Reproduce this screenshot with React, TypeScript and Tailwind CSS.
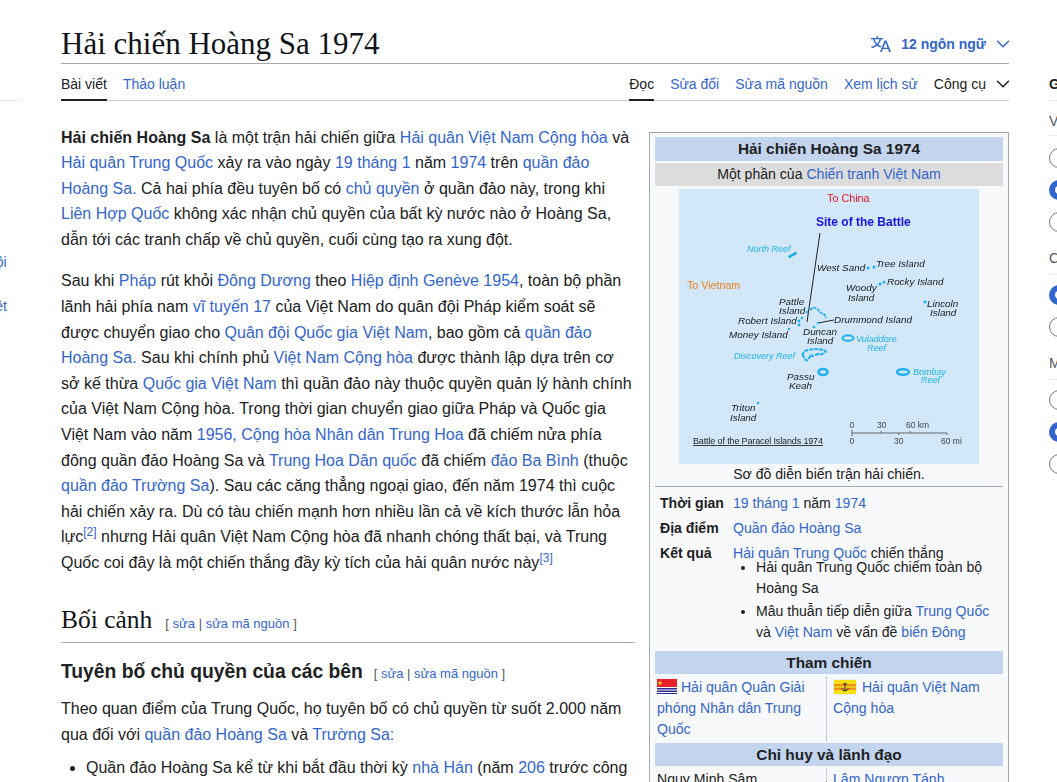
import React from "react";
import { ChevronDown } from "lucide-react";

const A: React.FC<{ children: React.ReactNode }> = ({ children }) => (
    <a href="#" className="text-[#3366cc]">{children}</a>
);

const EditLinks: React.FC<{ className?: string }> = ({ className }) => (
    <span className={"text-[13px] leading-none text-[#54595d] font-normal font-['Liberation_Sans',sans-serif] " + className}>
        [ <A>sửa</A> | <A>sửa mã nguồn</A> ]
    </span>
);

const Radio: React.FC<{ on?: boolean }> = ({ on }) => (
    <div className={on ? "w-5 h-5 shrink-0 rounded-full border-[6px] border-[#3366cc] bg-white" : "w-5 h-5 shrink-0 rounded-full border border-[#72777d] bg-white"} />
);

const labels: [string, number, number][] = [
    ["West Sand", 138, 82], ["Tree Island", 197, 78], ["Rocky Island", 208, 96], ["Woody", 167, 102], ["Island", 169, 112],
    ["Lincoln", 248, 118], ["Island", 251, 127], ["Pattle", 100, 116], ["Island", 100, 125], ["Robert Island", 59, 135],
    ["Drummond Island", 155, 134], ["Money Island", 50, 149], ["Duncan", 124, 146], ["Island", 128, 155],
    ["Passu", 108, 191], ["Keah", 110, 200], ["Triton", 52, 222], ["Island", 51, 232],
];

const reefLabels: [string, number, number][] = [
    ["North Reef", 68, 63], ["Vuladdore", 177, 153], ["Reef", 188, 162], ["Discovery Reef", 55, 170],
    ["Bombay", 234, 186], ["Reef", 242, 194],
];

const Map = () => (
    <svg width="300" height="275" viewBox="0 0 300 275" className="block blur-[0.3px]" fontFamily="'Liberation Sans', sans-serif">
        <rect width="300" height="275" fill="#d2e8f8" />
        <text x="148" y="13" fontSize="10.800" fill="#f01020">To China</text>
        <text x="137" y="37" fontSize="12" fontWeight="700" fill="#1414e0">Site of the Battle</text>
        <text x="8" y="100" fontSize="10.700" fill="#f07d1a">To Vietnam</text>
        <line x1="141" y1="44" x2="128" y2="133" stroke="#222" strokeWidth="1" />
        <line x1="139" y1="134" x2="155" y2="131" stroke="#222" strokeWidth="1" />
        {labels.map(([t, x, y]) => (
            <text key={t + x} x={x} y={y} fontSize="9.900" fontStyle="italic" fill="#1a1a1a">{t}</text>
        ))}
        {reefLabels.map(([t, x, y]) => (
            <text key={t + x} x={x} y={y} fontSize="9" fontStyle="italic" fill="#1eb0ee">{t}</text>
        ))}
        <g fill="#1eb0ee">
            <path d="M109 67l8-4.500 1.200 2.500-4 2-4 2.500z" />
            <circle cx="189" cy="79" r="1.600" />
            <circle cx="195" cy="78" r="1.600" />
            <circle cx="201" cy="95" r="1.500" />
            <circle cx="205" cy="93" r="1.500" />
            <circle cx="246" cy="113" r="1.600" />
            <circle cx="79" cy="214" r="1.300" />
            <circle cx="128" cy="123" r="1.300" />
            <circle cx="123" cy="129" r="1.300" />
            <circle cx="120" cy="132" r="1.400" />
            <circle cx="120" cy="136" r="1.400" />
            <circle cx="110" cy="140" r="1.200" />
            <circle cx="135" cy="138" r="1.300" />
            <circle cx="139" cy="134" r="1.300" />
        </g>
        <g fill="none" stroke="#1eb0ee">
            <path d="M131 121q4-4 7-1l4 4 4 2 1 3" strokeWidth="1.800" strokeDasharray="3 1" />
            <ellipse cx="169" cy="149" rx="5.500" ry="2.800" strokeWidth="2" />
            <path d="M124 167q-1-5 5-6t8-1 7 1 1 3-4 1-5 1-4 0-2 3-4 0z" strokeWidth="2" strokeDasharray="4 1" />
            <ellipse cx="144" cy="183" rx="4.500" ry="3" strokeWidth="2.600" />
            <ellipse cx="224" cy="183" rx="6" ry="2.800" strokeWidth="2.400" />
        </g>
        <text x="14" y="255" fontSize="9" fill="#222" textDecoration="underline" textLength="130">Battle of the Paracel Islands 1974</text>
        <g stroke="#666" strokeWidth="1">
            <line x1="173" y1="244" x2="268" y2="244" />
            <line x1="173" y1="241" x2="173" y2="247" />
            <line x1="202" y1="242" x2="202" y2="244" />
            <line x1="231" y1="242" x2="231" y2="244" />
            <line x1="220" y1="244" x2="220" y2="246" />
            <line x1="268" y1="244" x2="268" y2="246" />
        </g>
        <g fontSize="8.500" fill="#444">
            <text x="170.500" y="239">0</text>
            <text x="198" y="239">30</text>
            <text x="227" y="239">60 km</text>
            <text x="170.500" y="255">0</text>
            <text x="215" y="255">30</text>
            <text x="262" y="255">60 mi</text>
        </g>
    </svg>
);

const PlaFlag = () => (
    <svg width="20" height="15" viewBox="0 0 20 15" className="inline-block align-[-2px]">
        <rect width="20" height="15" fill="#fff" />
        <rect width="20" height="8" fill="#e8202a" />
        <path d="M3 1.500l.7 1.800 1.800 0-1.500 1.100.6 1.800-1.600-1.100-1.600 1.100.6-1.800-1.500-1.100 1.800 0z" fill="#f8e020" />
        <rect y="9" width="20" height="1.500" fill="#2a2a90" />
        <rect y="11.500" width="20" height="1.500" fill="#2a2a90" />
        <rect y="14" width="20" height="1" fill="#2a2a90" />
    </svg>
);

const RvnFlag = () => (
    <svg width="24" height="16" viewBox="0 0 24 16" className="inline-block align-[-3px] mr-[1px]">
        <rect width="24" height="16" fill="#eaecf0" />
        <rect x="1" y="1" width="22" height="14" fill="#f8e010" />
        <rect x="1" y="5" width="22" height="6" fill="#f09010" />
        <rect x="1" y="7" width="22" height="2" fill="#e8c818" />
        <path d="M12 3.500v8.500M10 5h4M8.500 9q1 3 3.500 3t3.500-3" fill="none" stroke="#333" strokeWidth="1" />
    </svg>
);

const Row: React.FC<{ label: string; children: React.ReactNode }> = ({ label, children }) => (
    <div className="flex px-[5px] py-[2px]">
        <div className="w-[73px] shrink-0 font-bold">{label}</div>
        <div>{children}</div>
    </div>
);

const Infobox = () => (
    <aside className="w-[360px] shrink-0 mt-[31px] border border-[#a2a9b1] bg-[#f8f9fa] px-[5px] pt-[4px] text-[14.08px] leading-[21px] text-[#202122]">
        <div className="h-[24px] leading-[24px] bg-[#c3d4ee] text-center font-bold text-[15.4px]">Hải chiến Hoàng Sa 1974</div>
        <div className="h-[23px] leading-[23px] mt-[2px] bg-[#dcdcdc] text-center">Một phần của <A>Chiến tranh Việt Nam</A></div>
        <div className="flex justify-center mt-[3px]"><Map /></div>
        <div className="text-center leading-[20px] h-[22px]">Sơ đồ diễn biến trận hải chiến.</div>
        <div className="border-t border-[#a2a9b1] pt-[4px]">
            <Row label="Thời gian"><A>19 tháng 1</A> năm <A>1974</A></Row>
            <Row label="Địa điểm"><A>Quần đảo Hoàng Sa</A></Row>
            <Row label="Kết quả"><A>Hải quân Trung Quốc</A> chiến thắng</Row>
            <ul className="list-disc pl-[101px] pr-[8px] -mt-[9px]">
                <li>Hải quân Trung Quốc chiếm toàn bộ Hoàng Sa</li>
                <li className="mt-[2px]">Mâu thuẫn tiếp diễn giữa <A>Trung Quốc</A> và <A>Việt Nam</A> về vấn đề <A>biển Đông</A></li>
            </ul>
        </div>
        <div className="h-[23px] leading-[23px] mt-[8px] bg-[#c3d4ee] text-center font-bold text-[15.4px]">Tham chiến</div>
        <div className="flex mt-[3px] h-[64px]">
            <div className="w-[172px] shrink-0 pl-[2px] pr-[4px] border-r border-dotted border-[#a2a9b1] text-[#3366cc]">
                <PlaFlag /> <A>Hải quân Quân Giải phóng Nhân dân Trung Quốc</A>
            </div>
            <div className="pl-[6px] pr-[10px]">
                <RvnFlag /> <A>Hải quân Việt Nam Cộng hòa</A>
            </div>
        </div>
        <div className="h-[23px] leading-[23px] mt-[2px] bg-[#c3d4ee] text-center font-bold text-[15.4px]">Chỉ huy và lãnh đạo</div>
        <div className="flex mt-[3px]">
            <div className="w-[172px] shrink-0 pl-[2px] border-r border-dotted border-[#a2a9b1]">Ngụy Minh Sâm</div>
            <div className="pl-[6px]"><A>Lâm Ngươn Tánh</A></div>
        </div>
    </aside>
);

export default function App() {
    return (
        <div className="flex h-[782px] w-[1057px] overflow-hidden bg-white text-[#202122] font-['Liberation_Sans',sans-serif]">
            {/* cut off left sidebar */}
            <div className="w-[21px] shrink-0 overflow-hidden pt-[100px] text-[14px] text-[#3366cc]">
                <div className="border-t border-[#eaecf0]" />
                <div className="mt-[151px] leading-[20px] -ml-[12px]">hội</div>
                <div className="mt-[24px] leading-[20px] -ml-[17px]">Việt</div>
            </div>

            <main className="w-[948px] shrink-0 ml-[40px]">
                <header className="flex items-end justify-between h-[64px] border-b border-[#a2a9b1]">
                    <h1 className="text-[31px] leading-[38px] text-[#101418] font-['Liberation_Serif',serif]">Hải chiến Hoàng Sa 1974</h1>
                    <div className="flex items-center text-[14px] font-bold text-[#3366cc] h-[38px]">
                        <svg width="20" height="20" viewBox="0 0 20 20" fill="#3366cc">
                            <path d="M20 18h-1.440a.6.6 0 0 1-.4-.12.8.8 0 0 1-.23-.31L17 15h-5l-1 2.540a.8.8 0 0 1-.22.3.6.6 0 0 1-.4.14H9l4.550-11.470h1.890zm-3.530-4.310L14.890 9.500a12 12 0 0 1-.39-1.240q-.09.37-.19.69l-.19.56-1.580 4.190zm-6.300-1.580a13.400 13.400 0 0 1-2.910-1.410 11.460 11.460 0 0 0 2.810-5.370H12V4H7.310a4 4 0 0 0-.2-.56C6.870 2.790 6.600 2 6.600 2l-1.470.5s.4.89.6 1.500H0v1.330h2.150A11.230 11.230 0 0 0 5 10.700a17.200 17.200 0 0 1-5 2.100q.56.82.87 1.380a23.300 23.300 0 0 0 5.220-2.510 15.600 15.600 0 0 0 3.560 1.770zM3.630 5.330h4.910a8.100 8.100 0 0 1-2.450 4.450 9.100 9.100 0 0 1-2.460-4.450" />
                        </svg>
                        <span className="ml-[10px]">12 ngôn ngữ</span>
                        <ChevronDown className="ml-[6px] -mr-[5px] w-[22px] h-[22px]" strokeWidth={1.6} />
                    </div>
                </header>

                <nav className="flex justify-between h-[37px] border-b border-[#c8ccd1] text-[14px] leading-[20px]">
                    <div className="flex gap-[16px]">
                        <div className="h-[37px] pt-[10px] border-b-2 border-[#202122]">Bài viết</div>
                        <div className="pt-[10px]"><A>Thảo luận</A></div>
                    </div>
                    <div className="flex gap-[16px]">
                        <div className="h-[37px] pt-[10px] border-b-2 border-[#202122]">Đọc</div>
                        <div className="pt-[10px]"><A>Sửa đổi</A></div>
                        <div className="pt-[10px]"><A>Sửa mã nguồn</A></div>
                        <div className="pt-[10px]"><A>Xem lịch sử</A></div>
                        <div className="pt-[10px] flex">
                            <span>Công cụ</span>
                            <ChevronDown className="ml-[6px] -mr-[5px] -mt-[1px] w-[22px] h-[22px]" strokeWidth={1.6} />
                        </div>
                    </div>
                </nav>

                <div className="flex justify-between">
                    <article className="w-[574px] shrink-0 text-[16px] leading-[25.6px] pt-[23.5px]">
                        <p>
                            <b>Hải chiến Hoàng Sa</b> là một trận hải chiến giữa <A>Hải quân Việt Nam Cộng hòa</A> và <A>Hải quân Trung Quốc</A> xảy ra vào ngày <A>19 tháng 1</A> năm <A>1974</A> trên <A>quần đảo Hoàng Sa.</A> Cả hai phía đều tuyên bố có <A>chủ quyền</A> ở quần đảo này, trong khi <A>Liên Hợp Quốc</A> không xác nhận chủ quyền của bất kỳ nước nào ở Hoàng Sa, dẫn tới các tranh chấp về chủ quyền, cuối cùng tạo ra xung đột.
                        </p>
                        <p className="mt-[16px]">
                            Sau khi <A>Pháp</A> rút khỏi <A>Đông Dương</A> theo <A>Hiệp định Genève 1954</A>, toàn bộ phần lãnh hải phía nam <A>vĩ tuyến 17</A> của Việt Nam do quân đội Pháp kiểm soát sẽ được chuyển giao cho <A>Quân đội Quốc gia Việt Nam</A>, bao gồm cả <A>quần đảo Hoàng Sa.</A> Sau khi chính phủ <A>Việt Nam Cộng hòa</A> được thành lập dựa trên cơ sở kế thừa <A>Quốc gia Việt Nam</A> thì quần đảo này thuộc quyền quản lý hành chính của Việt Nam Cộng hòa. Trong thời gian chuyển giao giữa Pháp và Quốc gia Việt Nam vào năm <A>1956, Cộng hòa Nhân dân Trung Hoa</A> đã chiếm nửa phía đông quần đảo Hoàng Sa và <A>Trung Hoa Dân quốc</A> đã chiếm <A>đảo Ba Bình</A> (thuộc <A>quần đảo Trường Sa</A>). Sau các căng thẳng ngoại giao, đến năm 1974 thì cuộc hải chiến xảy ra. Dù có tàu chiến mạnh hơn nhiều lần cả về kích thước lẫn hỏa lực<sup><A>[2]</A></sup> nhưng Hải quân Việt Nam Cộng hòa đã nhanh chóng thất bại, và Trung Quốc coi đây là một chiến thắng đầy kỳ tích của hải quân nước này<sup><A>[3]</A></sup>
                        </p>
                        <h2 className="mt-[28.5px] h-[39px] border-b border-[#a2a9b1] text-[25.5px] leading-[32px] text-[#101418] font-['Liberation_Serif',serif]">
                            Bối cảnh<EditLinks className="ml-[13px]" />
                        </h2>
                        <h3 className="mt-[15px] text-[19.3px] leading-[28px] font-bold">
                            Tuyên bố chủ quyền của các bên<EditLinks className="ml-[11px]" />
                        </h3>
                        <p className="mt-[10px]">
                            Theo quan điểm của Trung Quốc, họ tuyên bố có chủ quyền từ suốt 2.000 năm qua đối với <A>quần đảo Hoàng Sa</A> và <A>Trường Sa:</A>
                        </p>
                        <ul className="list-disc pl-[25px] mt-[8px]">
                            <li>Quần đảo Hoàng Sa kể từ khi bắt đầu thời kỳ <A>nhà Hán</A> (năm <A>206</A> trước công nguyên</li>
                        </ul>
                    </article>
                    <Infobox />
                </div>
            </main>

            {/* cut off right tools panel */}
            <div className="w-[8px] shrink-0 ml-[40px] overflow-hidden text-[14px] leading-[20px] pt-[74px]">
                <div className="w-[100px] font-bold">Giao diện</div>
                <div className="w-[100px] border-t border-[#eaecf0] mt-[6px] pt-[10px] text-[#54595d]">Văn bản</div>
                <div className="w-[100px] border-t border-[#eaecf0] mt-[4px]" />
                <div className="flex flex-col gap-[12px] mt-[12px]"><Radio /><Radio on /><Radio /></div>
                <div className="w-[100px] mt-[16px] text-[#54595d]">Chiều rộng</div>
                <div className="w-[100px] border-t border-[#eaecf0] mt-[6px]" />
                <div className="flex flex-col gap-[12px] mt-[10px]"><Radio on /><Radio /></div>
                <div className="w-[100px] mt-[16px] text-[#54595d]">Màu</div>
                <div className="w-[100px] border-t border-[#eaecf0] mt-[6px]" />
                <div className="flex flex-col gap-[12px] mt-[10px]"><Radio /><Radio on /><Radio /></div>
            </div>
        </div>
    );
}
